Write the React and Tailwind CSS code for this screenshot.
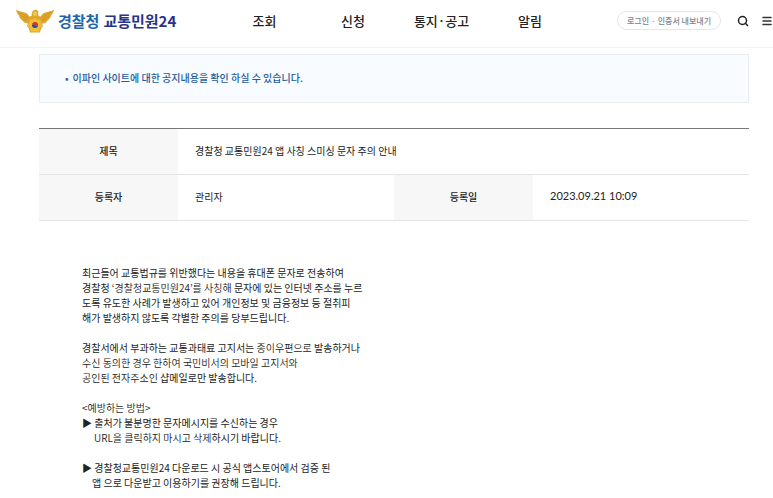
import { Menu, Search } from 'lucide-react';

const menus = ['조회', '신청', '통지·공고', '알림'];

function EagleEmblem() {
  return (
    <svg width="38" height="24" viewBox="0 0 76 48" aria-hidden="true">
      <path
        d="M0 1 C6 6 15 5 22 9 L27 15 L31 14 L32 6 Q35 1 40 1 L45 5 L44 8 L45 14 L49 15 L54 9 C61 5 70 6 76 1 C75 6 73 10 70 13 C69 18 66 21 63 23 C61 27 57 29 52 29 L54 34 L50 39 L48 47 L28 47 L26 39 L22 34 L24 29 C19 29 15 27 13 23 C10 21 7 18 6 13 C3 10 1 6 0 1 Z"
        fill="#dea62a"
      />
      <path
        d="M5 6 L24 16 M8 13 L24 20 M14 20 L24 23 M71 6 L52 16 M68 13 L52 20 M62 20 L52 23"
        stroke="#c48d22"
        strokeWidth="1.2"
        fill="none"
      />
      <path d="M33 8 L38 4 L43 8 L40 14 L36 14 Z" fill="#f0c552" />
      <path
        d="M38 18 L43 21 L49 22 L50 29 L53 34 L48 37 L46 45 L30 45 L28 37 L23 34 L26 29 L27 22 L33 21 Z"
        fill="#f3bd35"
      />
      <path d="M32 32 A6 6 0 0 1 44 32 Q41 35 38 32 Q35 29 32 32 Z" fill="#e02f3a" />
      <path d="M32 32 Q35 29 38 32 Q41 35 44 32 A6 6 0 0 1 32 32 Z" fill="#1e4fa3" />
    </svg>
  );
}

function Header() {
  return (
    <header className="flex h-12 items-center border-b border-[#f3f3f3] pb-1.5 pl-4">
      <a href="#home" className="flex shrink-0 items-center gap-1">
        <EagleEmblem />
        <span className="flex gap-1 pt-0.5 text-[15px] font-bold whitespace-nowrap">
          <span className="text-[#1e64ad]">경찰청</span>
          <span className="text-[#27348b]">교통민원24</span>
        </span>
      </a>
      <nav className="ml-11 grid w-[354px] grid-cols-4 text-center text-[13px] font-medium text-[#222]">
        {menus.map((menu) => (
          <a key={menu} href="#menu" className="whitespace-nowrap">
            {menu}
          </a>
        ))}
      </nav>
      <div className="ml-auto flex shrink-0 items-center">
        <div className="flex h-[19px] items-center gap-0.5 rounded-full border border-[#e4e6ee] px-[9px] text-[8px] font-medium whitespace-nowrap text-[#7b828f]">
          <a href="#login">로그인</a>
          <span>·</span>
          <a href="#cert">인증서 내보내기</a>
        </div>
        <button type="button" aria-label="검색" className="ml-4">
          <Search className="size-3 text-[#222]" strokeWidth={3} />
        </button>
        <button type="button" aria-label="전체메뉴" className="ml-3">
          <Menu className="size-3 text-[#333]" strokeWidth={3} />
        </button>
      </div>
    </header>
  );
}

function NoticeInfo() {
  return (
    <table className="mt-[25px] w-full table-fixed border-t border-[#777] text-[10px] text-[#222]">
      <colgroup>
        <col className="w-[139px]" />
        <col />
        <col className="w-[139px]" />
        <col />
      </colgroup>
      <tbody>
        <tr className="h-[46px] border-b border-[#e5e5e5]">
          <th scope="row" className="bg-[#f7f7f7] pb-0.5 font-medium">제목</th>
          <td colSpan={3} className="pb-0.5 pl-[17px]">
            경찰청 교통민원24 앱 사칭 스미싱 문자 주의 안내
          </td>
        </tr>
        <tr className="h-[46px] border-b border-[#e5e5e5]">
          <th scope="row" className="bg-[#f7f7f7] pb-0.5 font-medium">등록자</th>
          <td className="pb-0.5 pl-[17px]">관리자</td>
          <th scope="row" className="bg-[#f7f7f7] pb-0.5 font-medium">등록일</th>
          <td className="pb-0.5 pl-[17px] font-[Lato,sans-serif] text-[11px]">2023.09.21 10:09</td>
        </tr>
      </tbody>
    </table>
  );
}

export default function App() {
  return (
    <div className="bg-white font-['Noto_Sans_CJK_KR',sans-serif] text-[#222]">
      <Header />
      <main className="pt-1.5 pr-6 pl-[39px]">
        <p className="flex h-[49px] items-center gap-1 border border-[#e9ecf1] bg-[#f8fbff] pb-0.5 pl-[25px] text-[10px] font-medium text-[#1f5c9e]">
          <span>•</span>
          이파인 사이트에 대한 공지내용을 확인 하실 수 있습니다.
        </p>
        <NoticeInfo />
        <article className="space-y-[15px] pt-11 pl-[43px] text-[10px] leading-[15px]">
          <p>
            최근들어 교통법규를 위반했다는 내용을 휴대폰 문자로 전송하여
            <br />
            경찰청 <span className="font-[350]">‘경찰청교통민원24’를 사칭해</span> 문자에 있는 인터넷 주소를 누르
            <br />
            도록 유도한 사례가 발생하고 있어 개인정보 및 금융정보 등 절취피
            <br />
            해가 발생하지 않도록 각별한 주의를 당부드립니다.
          </p>
          <p>
            경찰서에서 부과하는 교통과태료 고지서는 <span className="font-[350]">종이우편으로</span> 발송하거나
            <br />
            <span className="font-[350]">수신 동의한 경우 한하여 국민비서의 모바일 고지서와</span>
            <br />
            <span className="font-[350]">공인된 전자주소인</span> 샵메일로만 발송합니다.
          </p>
          <div>
            <p className="font-[350]">&lt;예방하는 방법&gt;</p>
            <p>▶ 출처가 불분명한 문자메시지를 수신하는 경우</p>
            <p className="pl-3">
              <span className="font-[350]">URL을 클릭하지 마시고 삭제</span>하시기 바랍니다.
            </p>
          </div>
          <div>
            <p>▶ 경찰청교통민원24 다운로드 시 공식 앱스토어에서 검증 된</p>
            <p className="pl-2.5">앱 으로 다운받고 이용하기를 권장해 드립니다.</p>
          </div>
        </article>
      </main>
    </div>
  );
}
